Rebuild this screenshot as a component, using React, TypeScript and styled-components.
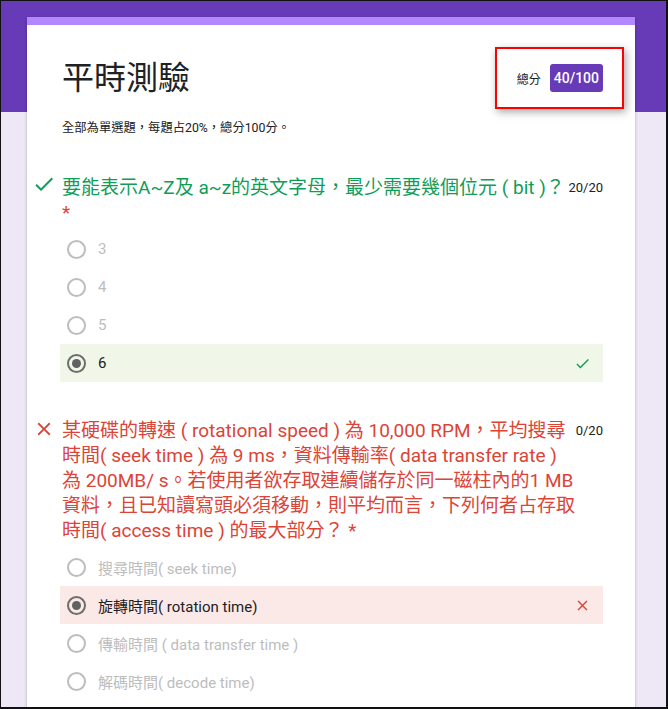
import React from "react";
import styled, { createGlobalStyle } from "styled-components";

const GlobalStyle = createGlobalStyle`
  html, body {
    margin: 0;
    padding: 0;
    background: #fff;
  }
  body {
    font-family: Roboto, "Noto Sans CJK TC", "Noto Sans", sans-serif;
    color: #202124;
  }
`;

type Status = "none" | "correct" | "wrong";

type TOption = {
  readonly label: string;
  readonly selected?: boolean;
  readonly status?: Status;
};

type TQuestion = {
  readonly result: "correct" | "wrong";
  readonly lines: string[];
  readonly star: string;
  readonly score: string;
  readonly options: TOption[];
};

const questions: TQuestion[] = [
  {
    result: "correct",
    lines: ["要能表示A~Z及 a~z的英文字母，最少需要幾個位元 ( bit )？"],
    star: "*",
    score: "20/20",
    options: [
      { label: "3" },
      { label: "4" },
      { label: "5" },
      { label: "6", selected: true, status: "correct" },
    ],
  },
  {
    result: "wrong",
    lines: [
      "某硬碟的轉速 ( rotational speed ) 為 10,000 RPM，平均搜尋",
      "時間( seek time ) 為 9 ms，資料傳輸率( data transfer rate )",
      "為 200MB/ s。若使用者欲存取連續儲存於同一磁柱內的1 MB",
      "資料，且已知讀寫頭必須移動，則平均而言，下列何者占存取",
    ],
    star: "時間( access time ) 的最大部分？ *",
    score: "0/20",
    options: [
      { label: "搜尋時間( seek time)" },
      { label: "旋轉時間( rotation time)", selected: true, status: "wrong" },
      { label: "傳輸時間 ( data transfer time )" },
      { label: "解碼時間( decode time)" },
    ],
  },
];

const CheckIcon = ({ size, color }: { size: number; color: string }) => (
  <svg width={size} height={size} viewBox="0 0 24 24" fill={color}>
    <path d="M9 16.17L4.83 12l-1.42 1.41L9 19 21 7l-1.41-1.41z" />
  </svg>
);

const CloseIcon = ({ size, color }: { size: number; color: string }) => (
  <svg width={size} height={size} viewBox="0 0 24 24" fill={color}>
    <path d="M19 6.41L17.59 5 12 10.59 6.41 5 5 6.41 10.59 12 5 17.59 6.41 19 12 13.41 17.59 19 19 17.59 13.41 12z" />
  </svg>
);

const GREEN = "#0f9d58";
const RED = "#db4437";

export default function App() {
  return (
    <Frame>
      <GlobalStyle />
      <Page>
        <Card>
          <Header>
            <Title>平時測驗</Title>
            <Total>
              <TotalLabel>總分</TotalLabel>
              <Badge>40/100</Badge>
            </Total>
          </Header>
          <Description>全部為單選題，每題占20%，總分100分。</Description>

          {questions.map((q, qi) => (
            <Question key={qi}>
              <QuestionHead>
                <ResultIcon $result={q.result}>
                  {q.result === "correct" ? (
                    <CheckIcon size={24} color={GREEN} />
                  ) : (
                    <CloseIcon size={22} color={RED} />
                  )}
                </ResultIcon>
                <QuestionText $result={q.result}>
                  {q.lines.map((line, i) => (
                    <Line key={i}>{line}</Line>
                  ))}
                  <Line>
                    {q.result === "correct" ? <Star>{q.star}</Star> : q.star}
                  </Line>
                </QuestionText>
                <Score>{q.score}</Score>
              </QuestionHead>
              <Options>
                {q.options.map((o, oi) => (
                  <Option key={oi} $status={o.status ?? "none"}>
                    <Radio $selected={!!o.selected} />
                    <OptionLabel $selected={!!o.selected}>{o.label}</OptionLabel>
                    {o.status === "correct" && <CheckIcon size={17} color={GREEN} />}
                    {o.status === "wrong" && <CloseIcon size={17} color={RED} />}
                  </Option>
                ))}
              </Options>
            </Question>
          ))}
        </Card>
        <Annotation />
      </Page>
    </Frame>
  );
}

const Frame = styled.div`
  width: 668px;
  height: 709px;
  box-sizing: border-box;
  border-style: solid;
  border-color: #111;
  border-width: 1px 2px 2px 1px;
  overflow: hidden;
`;

const Page = styled.div`
  position: relative;
  height: 100%;
  padding: 16px 0 0 26px;
  box-sizing: border-box;
  background: linear-gradient(#673ab7 0, #673ab7 111px, #ede7f6 111px);
`;

const Card = styled.div`
  width: 608px;
  min-height: 760px;
  background: #fff;
  border-top: 8px solid #b388ff;
  box-shadow: 0 1px 3px rgba(0, 0, 0, 0.25);
`;

const Header = styled.div`
  display: flex;
  align-items: center;
  justify-content: space-between;
  padding: 33px 32px 0 35px;
`;

const Title = styled.h1`
  margin: 0;
  font-size: 32px;
  line-height: 40px;
  font-weight: 400;
  color: #202124;
`;

const Total = styled.div`
  display: flex;
  align-items: center;
  gap: 9px;
`;

const TotalLabel = styled.span`
  font-size: 12px;
  color: #202124;
`;

const Badge = styled.span`
  display: inline-flex;
  align-items: center;
  height: 28px;
  padding: 0 4px;
  border-radius: 3px;
  background: #673ab7;
  color: #fff;
  font-size: 14px;
  font-weight: 500;
`;

const Description = styled.p`
  margin: 20px 0 0;
  padding-left: 35px;
  font-size: 12.3px;
  line-height: 20px;
  color: #202124;
`;

const Question = styled.section`
  margin-top: 37px;

  & + & {
    margin-top: 36px;
  }
`;

const QuestionHead = styled.div`
  display: flex;
  align-items: flex-start;
  padding: 0 32px 0 5px;
`;

const ResultIcon = styled.div<{ $result: "correct" | "wrong" }>`
  width: 24px;
  margin-right: 6px;
  flex-shrink: 0;
  display: flex;
  justify-content: center;
  margin-top: ${(p) => (p.$result === "correct" ? "-3px" : "0")};
`;

const QuestionText = styled.div<{ $result: "correct" | "wrong" }>`
  flex: 1;
  min-width: 0;
  font-size: 19px;
  line-height: 25px;
  color: ${(p) => (p.$result === "correct" ? GREEN : RED)};
`;

const Line = styled.div`
  white-space: nowrap;
`;

const Star = styled.span`
  color: ${RED};
`;

const Score = styled.div`
  flex-shrink: 0;
  margin-left: 6px;
  font-size: 13px;
  line-height: 25px;
  color: #202124;
`;

const Options = styled.div`
  margin: 5px 32px 0 33px;
`;

const Option = styled.div<{ $status: Status }>`
  display: flex;
  align-items: center;
  height: 38px;
  padding: 0 12px 0 7px;
  background: ${(p) =>
    p.$status === "correct" ? "#f0f7e9" : p.$status === "wrong" ? "#fbe9e7" : "transparent"};
`;

const Radio = styled.span<{ $selected: boolean }>`
  position: relative;
  width: 19px;
  height: 19px;
  box-sizing: border-box;
  border-radius: 50%;
  border: 2px solid ${(p) => (p.$selected ? "#6d6d6d" : "#bdbdbd")};
  flex-shrink: 0;

  &::after {
    content: "";
    display: ${(p) => (p.$selected ? "block" : "none")};
    position: absolute;
    inset: 3px;
    border-radius: 50%;
    background: #616161;
  }
`;

const OptionLabel = styled.span<{ $selected: boolean }>`
  flex: 1;
  margin-left: 12px;
  font-size: 15px;
  color: ${(p) => (p.$selected ? "#202124" : "#bdbdbd")};
`;

const Annotation = styled.div`
  position: absolute;
  left: 494px;
  top: 46px;
  width: 129px;
  height: 62px;
  box-sizing: border-box;
  border: 2px solid #f00;
  box-shadow: 2px 3px 8px rgba(0, 0, 0, 0.35);
  pointer-events: none;
`;
